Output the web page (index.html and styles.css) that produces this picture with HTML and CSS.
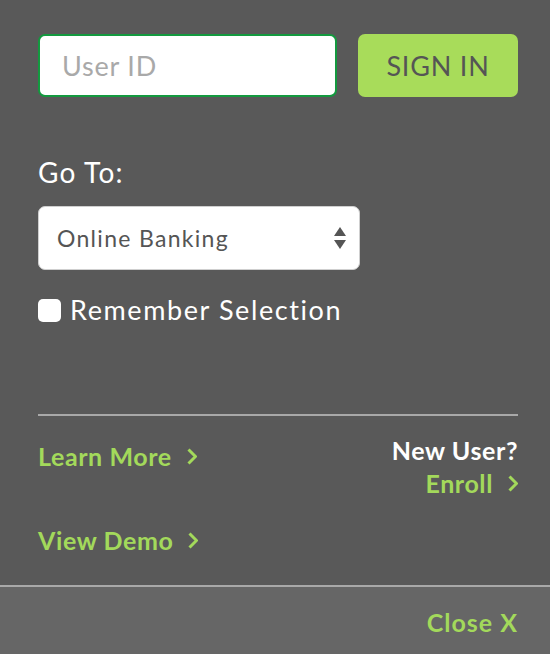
FILE: index.html
```html
<!DOCTYPE html>
<html>
<head>
<meta charset="utf-8">
<link rel="stylesheet" href="styles.css">
</head>
<body>
<div class="page">
  <div class="panel">
    <div class="login">
      <div class="userid">User ID</div>
      <div class="signin">SIGN IN</div>
    </div>
    <div class="goto">Go To:</div>
    <div class="select">
      <span>Online Banking</span>
      <svg class="arrows" width="12" height="22" viewBox="0 0 12 22"><polygon points="6,0 12,9 0,9" fill="#555"/><polygon points="0,13 12,13 6,22" fill="#555"/></svg>
    </div>
    <div class="remember"><span class="box"></span><span>Remember Selection</span></div>
    <div class="rule"></div>
    <div class="links">
      <div class="leftcol">
        <a class="link">Learn More <svg class="chev" width="10" height="17" viewBox="0 0 10 17"><polyline points="1.5,1.5 8.5,8.5 1.5,15.5" fill="none" stroke="#a3d95b" stroke-width="3"/></svg></a>
        <a class="link">View Demo <svg class="chev" width="10" height="17" viewBox="0 0 10 17"><polyline points="1.5,1.5 8.5,8.5 1.5,15.5" fill="none" stroke="#a3d95b" stroke-width="3"/></svg></a>
      </div>
      <div class="rightcol">
        <div class="newuser">New User?</div>
        <a class="link">Enroll <svg class="chev" width="10" height="17" viewBox="0 0 10 17"><polyline points="1.5,1.5 8.5,8.5 1.5,15.5" fill="none" stroke="#a3d95b" stroke-width="3"/></svg></a>
      </div>
    </div>
  </div>
  <div class="footer"><a class="close">Close X</a></div>
</div>
</body>
</html>
```
FILE: styles.css
```css
html, body {
  margin: 0;
  padding: 0;
  background: #595959;
  font-family: "Lato", "Open Sans", sans-serif;
}
.page {
  display: flex;
  flex-direction: column;
  min-height: 654px;
}
.panel {
  flex: 1;
  padding: 34px 32px 0 38px;
}
.login {
  display: flex;
  gap: 21px;
}
.userid {
  box-sizing: border-box;
  width: 299px;
  height: 63px;
  background: #fff;
  border: 2px solid #13993f;
  border-radius: 7px;
  color: #a9a9a9;
  font-size: 27px;
  letter-spacing: 0.8px;
  display: flex;
  align-items: center;
  padding-left: 22px;
}
.signin {
  width: 160px;
  height: 63px;
  background: #a8dc5a;
  border-radius: 7px;
  color: #555;
  font-size: 27px;
  letter-spacing: 0.8px;
  display: flex;
  align-items: center;
  justify-content: center;
}
.goto {
  margin-top: 60px;
  color: #fff;
  font-size: 28px;
  letter-spacing: 1.2px;
  line-height: 30px;
}
.select {
  box-sizing: border-box;
  margin-top: 19px;
  width: 322px;
  height: 64px;
  background: #fff;
  border: 1px solid #cfcfcf;
  border-radius: 7px;
  display: flex;
  align-items: center;
  justify-content: space-between;
  padding: 0 13px 0 18px;
  color: #555;
  font-size: 23px;
  letter-spacing: 1.3px;
}
.remember {
  margin-top: 25px;
  display: flex;
  align-items: center;
  gap: 9px;
  color: #fff;
  font-size: 27px;
  letter-spacing: 1.6px;
  line-height: 30px;
}
.box {
  width: 23px;
  height: 23px;
  background: #fff;
  border-radius: 5px;
}
.rule {
  margin-top: 89px;
  height: 2px;
  background: #a9a9a9;
}
.links {
  display: flex;
  justify-content: space-between;
  padding-top: 19px;
}
.leftcol {
  display: flex;
  flex-direction: column;
  gap: 54px;
  padding-top: 6px;
}
.rightcol {
  display: flex;
  flex-direction: column;
  align-items: flex-end;
  gap: 3px;
}
.link {
  color: #a3d95b;
  font-weight: 700;
  font-size: 25px;
  letter-spacing: 0.6px;
  line-height: 30px;
  display: flex;
  align-items: center;
  gap: 15px;
}
.newuser {
  color: #fff;
  font-weight: 700;
  font-size: 25px;
  letter-spacing: 0.6px;
  line-height: 30px;
}
.footer {
  height: 67px;
  border-top: 2px solid #a9a9a9;
  background: #666;
  display: flex;
  justify-content: flex-end;
  padding: 0 32px;
}
.close {
  margin-top: 20px;
  color: #a3d95b;
  font-weight: 700;
  font-size: 25px;
  letter-spacing: 1px;
  line-height: 30px;
  height: 30px;
}
```
